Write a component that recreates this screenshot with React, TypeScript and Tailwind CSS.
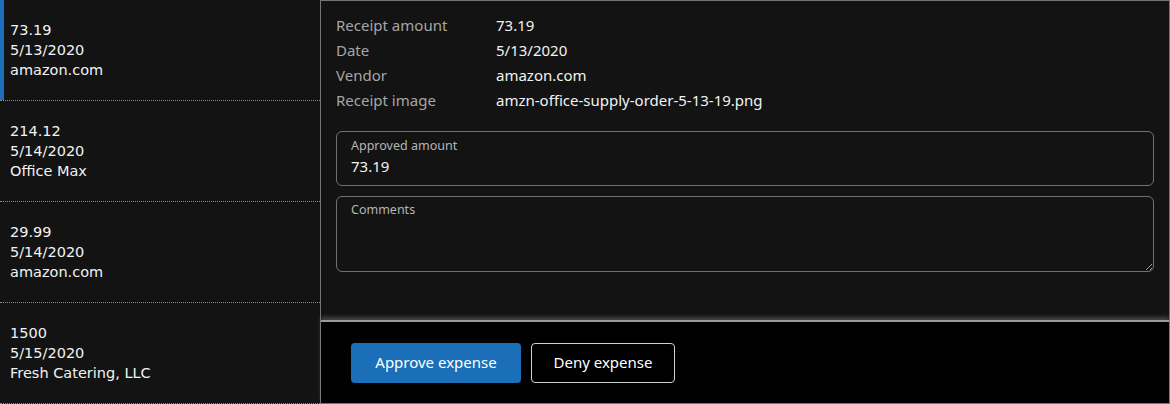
import React from 'react'

type Expense = { amount: string; date: string; vendor: string }

const expenses: Expense[] = [
  { amount: '73.19', date: '5/13/2020', vendor: 'amazon.com' },
  { amount: '214.12', date: '5/14/2020', vendor: 'Office Max' },
  { amount: '29.99', date: '5/14/2020', vendor: 'amazon.com' },
  { amount: '1500', date: '5/15/2020', vendor: 'Fresh Catering, LLC' },
]

const details = [
  ['Receipt amount', '73.19'],
  ['Date', '5/13/2020'],
  ['Vendor', 'amazon.com'],
  ['Receipt image', 'amzn-office-supply-order-5-13-19.png'],
]

export default function App() {
  const [selected, setSelected] = React.useState(0)
  const [approved, setApproved] = React.useState('73.19')
  const [comments, setComments] = React.useState('')

  return (
    <div className="flex h-[404px] w-[1170px] bg-[#131313] text-[#f2f2f2] overflow-hidden">
      <ul className="w-[320px] shrink-0 font-['DejaVu_Sans',sans-serif] text-[14.5px] leading-[20px]">
        {expenses.map((x, i) => (
          <li
            key={i}
            onClick={() => setSelected(i)}
            className={
              'h-[101px] border-b border-dotted border-[#8a8a8a] flex flex-col justify-center pl-[10px] pr-2 cursor-pointer ' +
              (i === selected ? 'shadow-[inset_4px_0_0_#1c6fbb]' : '')
            }
          >
            <div>{x.amount}</div>
            <div>{x.date}</div>
            <div>{x.vendor}</div>
          </li>
        ))}
      </ul>

      <section className="flex-1 flex flex-col border border-[#70757a] font-['Noto_Sans',sans-serif]">
        <div className="flex-1 px-[15px] pt-[12px]">
          <dl className="grid grid-cols-[160px_1fr] text-[15px] leading-[25px]">
            {details.map(([k, v]) => (
              <React.Fragment key={k}>
                <dt className="text-[#a6a6a6]">{k}</dt>
                <dd className="text-[#f2f2f2]">{v}</dd>
              </React.Fragment>
            ))}
          </dl>

          <label className="mt-[18px] block h-[55px] rounded-[6px] border border-[#6e7276] px-[14px] pt-[6px]">
            <div className="text-[12.5px] leading-[16px] text-[#b5b5b5]">Approved amount</div>
            <input
              value={approved}
              onChange={(e) => setApproved(e.target.value)}
              className="w-full bg-transparent text-[15px] leading-[24px] text-[#f2f2f2] outline-none"
            />
          </label>

          <div className="relative mt-[10px]">
            <div className="absolute left-[15px] top-[6px] text-[12.5px] leading-[16px] text-[#b5b5b5] pointer-events-none">
              Comments
            </div>
            <textarea
              value={comments}
              onChange={(e) => setComments(e.target.value)}
              className="block w-full h-[76px] rounded-[6px] border border-[#6e7276] bg-transparent px-[14px] pt-[24px] text-[15px] text-[#f2f2f2] outline-none resize-y"
            />
          </div>
        </div>

        <footer className="h-[83px] shrink-0 bg-black border-t-2 border-[#9a9a9a] shadow-[0_-3px_4px_rgba(160,160,160,0.35)] flex items-center gap-[10px] pl-[30px]">
          <button className="h-[40px] w-[170px] rounded-[4px] bg-[#1b6fb9] text-[15px] text-white">
            Approve expense
          </button>
          <button className="h-[40px] w-[144px] rounded-[4px] border border-[#cfcfcf] bg-black text-[15px] text-white">
            Deny expense
          </button>
        </footer>
      </section>
    </div>
  )
}
